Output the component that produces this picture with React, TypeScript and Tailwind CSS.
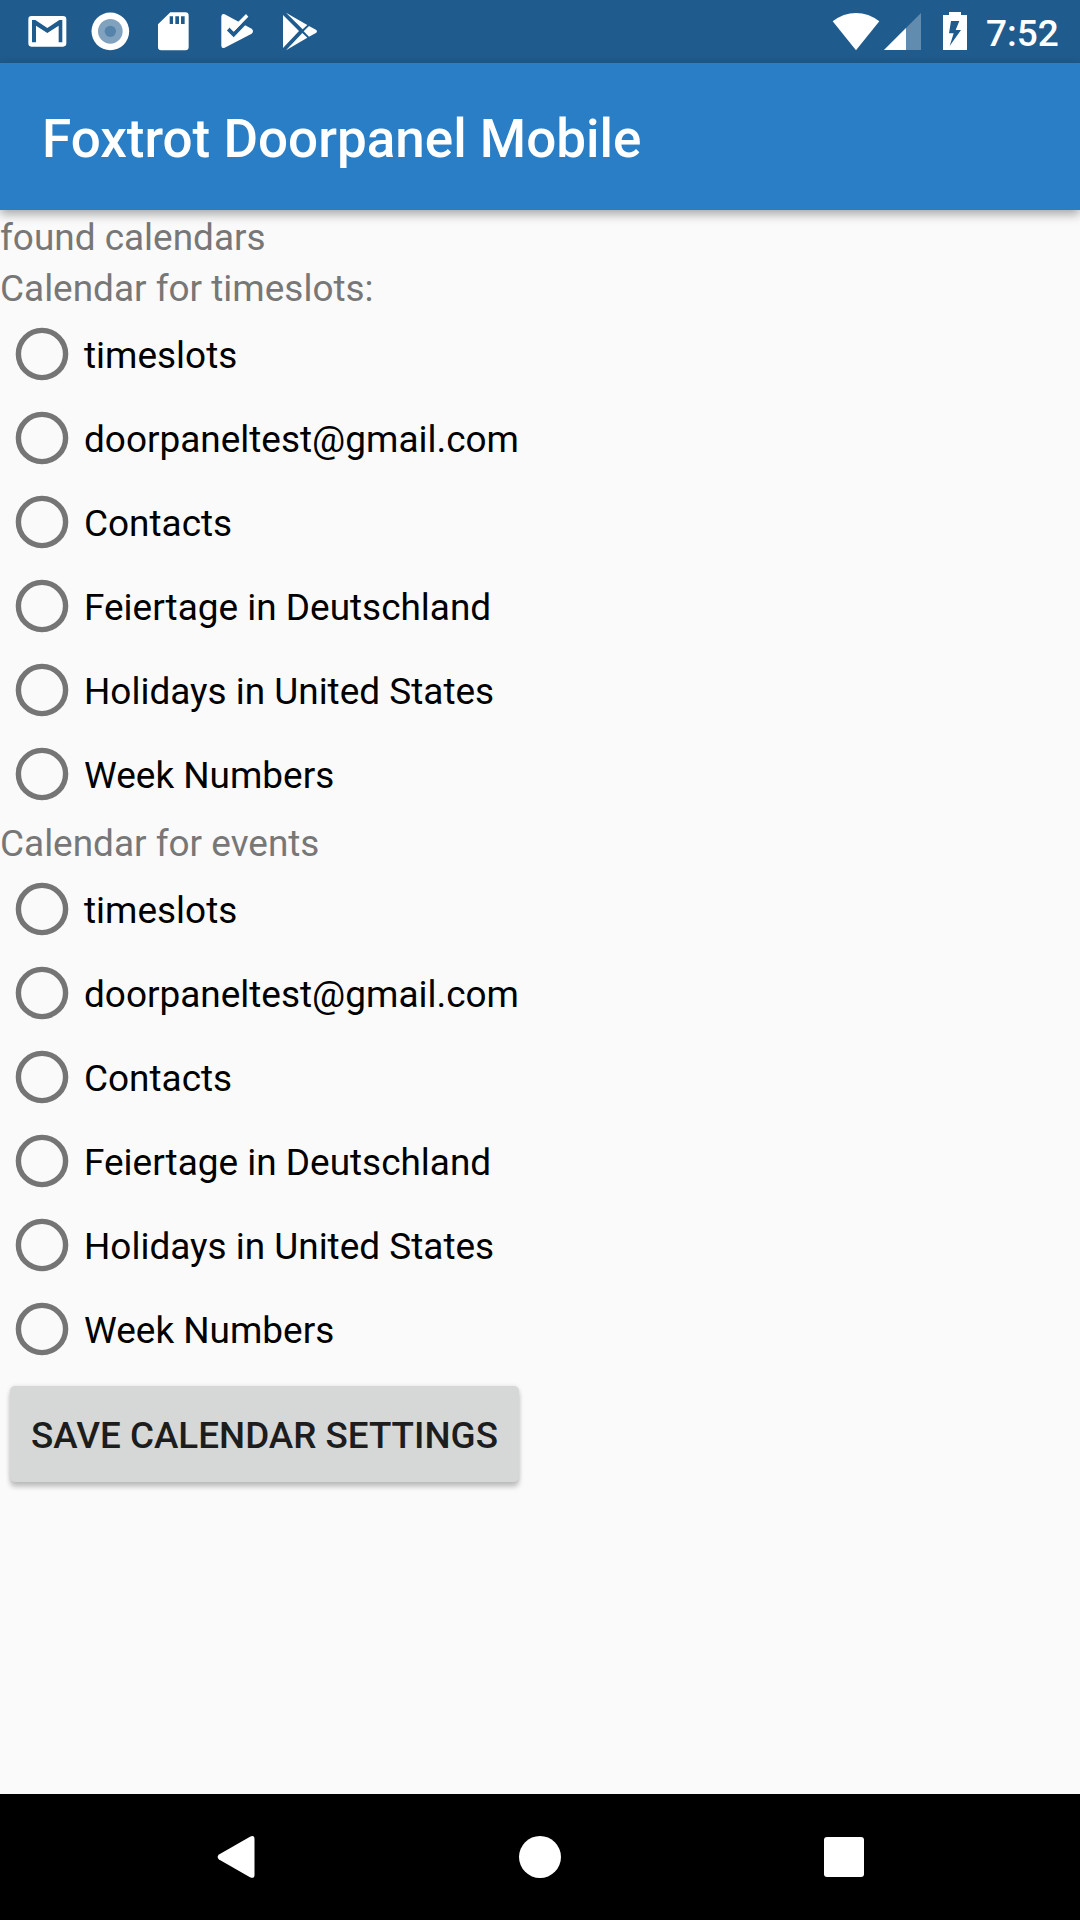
const calendars = [
  'timeslots',
  'doorpaneltest@gmail.com',
  'Contacts',
  'Feiertage in Deutschland',
  'Holidays in United States',
  'Week Numbers',
];

function NotificationIcons() {
  return (
    <svg width="340" height="63" viewBox="0 0 1020 189" fill="#fff">
      {/* mail */}
      <path
        fillRule="evenodd"
        d="M94 48H189Q199 48 199 58V130Q199 140 189 140H94Q85 140 85 130V58Q85 48 94 48ZM96 127H108V77L142 99L176 77V127H187V60H178L142 84L106 60H96Z"
      />
      {/* record dot */}
      <circle cx="331" cy="94" r="56.5" />
      <circle cx="331" cy="94" r="37" fill="#80a2bf" />
      <circle cx="331" cy="94" r="17" fill="#5583a9" />
      {/* memory card */}
      <path
        fillRule="evenodd"
        d="M511 37H556Q566 37 566 47V141Q566 151 556 151H484Q474 151 474 141V73ZM509 49V72H519V49ZM526 49V72H537V49ZM543 49V72H554V49Z"
      />
      {/* checked play badge */}
      <path d="M664 50Q664 39 674 43L755 86Q763 93 755 101L674 143Q664 146 664 137Z" />
      <path d="M685 87L701 103L752 50" fill="none" stroke="#1f5b8d" strokeWidth="12" />
      <path d="M697 75L709 71L738 42L745 50L701 95L690 84Z" />
      {/* store */}
      <path d="M849 45L897 93L849 144Z" />
      <path d="M858 38L922 75L908 88Z" />
      <path d="M927 78L949 90Q953 94 949 98L927 110L911 94Z" />
      <path d="M858 151L922 113L907 99Z" />
    </svg>
  );
}

function SystemIcons() {
  return (
    <svg width="180" height="63" viewBox="0 0 540 189" fill="#fff">
      <path d="M98 64Q130 39 168 39T238 64L168 151Z" />
      <path d="M363 39V150H252Z" fillOpacity="0.3" />
      <path d="M318 84V150H252Z" />
      <path
        fillRule="evenodd"
        d="M447 36H483V45H501V150H429V45H447ZM453 63L447 100H461L449 138L483 90H467L478 63Z"
      />
    </svg>
  );
}

function CalendarGroup({ name }: { name: string }) {
  return (
    <div role="radiogroup">
      {calendars.map((label) => (
        <label key={label} className="flex h-[84px] items-center">
          <input type="radio" name={name} className="sr-only" />
          <svg className="shrink-0" width="84" height="84" viewBox="0 0 84 84" fill="none">
            <circle cx="42" cy="42" r="23.6" stroke="#757575" strokeWidth="5.4" />
          </svg>
          <span className="pt-[2px] leading-[51px] text-black">{label}</span>
        </label>
      ))}
    </div>
  );
}

export default function App() {
  return (
    <div className="relative flex h-[1920px] w-[1080px] flex-col overflow-hidden bg-[#fafafa] font-['Roboto',sans-serif] text-[36.95px]">
      <div className="flex h-[63px] shrink-0 justify-between bg-[#1f5b8d]">
        <NotificationIcons />
        <div className="flex">
          <SystemIcons />
          <span className="w-[100px] pl-[6px] pt-[2px] text-[37px] font-medium leading-[63px] text-white">7:52</span>
        </div>
      </div>
      <header className="z-10 flex h-[147px] shrink-0 items-center bg-[#2a7ec5] pl-[42px] shadow-[0_4px_10px_rgba(0,0,0,0.35)]">
        <h1 className="pt-[5px] text-[53px] font-medium leading-[62px] text-white">Foxtrot Doorpanel Mobile</h1>
      </header>
      <main className="flex-1">
        <p className="h-[51px] pt-[2px] leading-[51px] text-[#777777]">found calendars</p>
        <p className="h-[51px] pt-[2px] leading-[51px] text-[#777777]">Calendar for timeslots:</p>
        <CalendarGroup name="timeslots" />
        <p className="h-[51px] pt-[2px] leading-[51px] text-[#777777]">Calendar for events</p>
        <CalendarGroup name="events" />
        <button className="ml-[10px] mt-[15px] flex h-[96px] w-[509px] items-center justify-center rounded-[5px] bg-[#d6d8d7] pt-[4px] text-[36.8px] font-medium text-[#1d1d1d] shadow-[0_5px_5px_rgba(0,0,0,0.22),0_0_4px_rgba(0,0,0,0.1)]">
          SAVE CALENDAR SETTINGS
        </button>
      </main>
      <nav className="flex h-[126px] shrink-0 items-center justify-between bg-black pl-[217px] pr-[216px]">
        <svg width="38" height="42" viewBox="0 0 38 42" fill="#fff">
          <path d="M33 .7Q37.5-1.3 37.5 3V39Q37.5 43 33 41.300L2 23.500Q-.8 21 2 18.500Z" />
        </svg>
        <div className="ml-px size-[42px] rounded-full bg-white" />
        <div className="size-10 rounded-[3px] bg-white" />
      </nav>
    </div>
  );
}
